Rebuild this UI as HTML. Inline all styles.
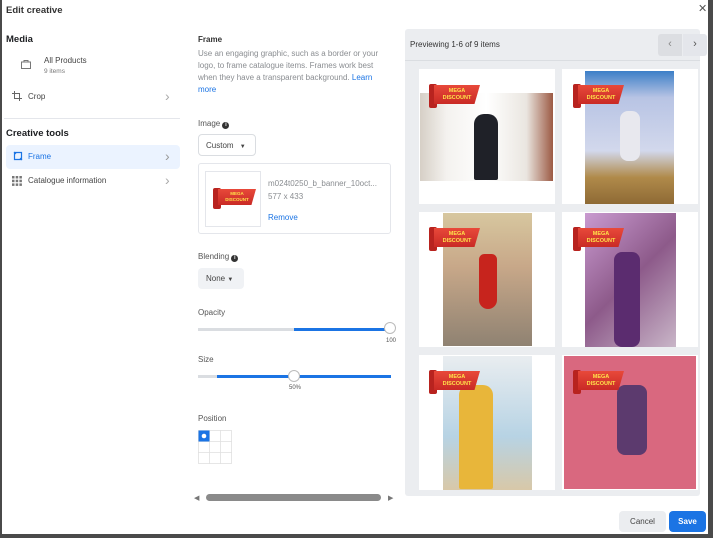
<!DOCTYPE html>
<html><head><style>
*{box-sizing:border-box;margin:0;padding:0}
body{width:713px;height:538px;background:#4a4a4a;font-family:"Liberation Sans",sans-serif;position:relative;overflow:hidden;color:#1c1e21}
.main{position:absolute;left:2px;top:0;width:706px;height:534px;background:#fff}
.a{position:absolute}
.t{font-size:8px;color:#444}
.g{color:#8a8d91}
.chev{position:absolute;font-size:14px;color:#aaa;font-weight:300}
.card{position:absolute;background:#fff;width:136px;height:135px;overflow:hidden}
.ph{position:absolute}
.rib{position:absolute;width:50px;height:22px}
.rib .r1{position:absolute;left:0;top:0;width:8px;height:24px;background:#b8231f;border-radius:2px}
.rib .r2{position:absolute;left:5px;top:1px;width:46px;height:19px;background:linear-gradient(#e8493a,#c92a25);clip-path:polygon(0 0,100% 0,88% 100%,0 100%);color:#ffe24a;font-size:5.5px;font-weight:bold;text-align:center;line-height:7px;padding-top:3px}
</style></head><body>
<div class="main">
<div class="a" style="left:4px;top:5px;font-size:9.5px;font-weight:bold;color:#333">Edit creative</div>
<div class="a" style="left:696px;top:2px;font-size:11px;color:#555">✕</div>

<div class="a" style="left:4px;top:34px;font-size:9.5px;font-weight:bold">Media</div>
<svg class="a" style="left:18px;top:58px" width="12" height="12" viewBox="0 0 12 12"><path d="M1.5 4h9v6.5h-9zM4 4V2.5h4V4" fill="none" stroke="#777" stroke-width="1"/></svg>
<div class="a t" style="left:42px;top:56px">All Products</div>
<div class="a" style="left:42px;top:68px;font-size:6.5px;color:#777">9 items</div>
<svg class="a" style="left:10px;top:91px" width="10" height="10" viewBox="0 0 10 10"><path d="M2.5 0v7.5H10M0 2.5h7.5V10" fill="none" stroke="#666" stroke-width="1"/></svg>
<div class="a t" style="left:26px;top:92px">Crop</div>
<div class="chev" style="left:163px;top:88px">›</div>
<div class="a" style="left:2px;top:118px;width:176px;height:1px;background:#e4e6eb"></div>
<div class="a" style="left:4px;top:128px;font-size:9.5px;font-weight:bold">Creative tools</div>
<div class="a" style="left:4px;top:145px;width:174px;height:24px;background:#ebf3ff;border-radius:4px"></div>
<svg class="a" style="left:11px;top:151px" width="10" height="10" viewBox="0 0 10 10"><path d="M1.5 1.5h7v7h-7z" fill="none" stroke="#1b74e4" stroke-width="1.2"/><path d="M1 1l2 2M9 9L7 7" stroke="#1b74e4"/></svg>
<div class="a" style="left:26px;top:152px;font-size:8px;color:#1b74e4">Frame</div>
<div class="chev" style="left:163px;top:148px;color:#999">›</div>
<svg class="a" style="left:10px;top:176px" width="10" height="10" viewBox="0 0 10 10"><g fill="#777"><rect x="0" y="0" width="2.5" height="2.5"/><rect x="3.7" y="0" width="2.5" height="2.5"/><rect x="7.4" y="0" width="2.5" height="2.5"/><rect x="0" y="3.7" width="2.5" height="2.5"/><rect x="3.7" y="3.7" width="2.5" height="2.5"/><rect x="7.4" y="3.7" width="2.5" height="2.5"/><rect x="0" y="7.4" width="2.5" height="2.5"/><rect x="3.7" y="7.4" width="2.5" height="2.5"/><rect x="7.4" y="7.4" width="2.5" height="2.5"/></g></svg>
<div class="a t" style="left:26px;top:176px">Catalogue information</div>
<div class="chev" style="left:163px;top:172px">›</div>

<div class="a" style="left:196px;top:35px;font-size:8px;font-weight:bold;color:#333">Frame</div>
<div class="a g" style="left:196px;top:48px;width:192px;font-size:8px;line-height:12px">Use an engaging graphic, such as a border or your logo, to frame catalogue items. Frames work best when they have a transparent background. <span style="color:#1b74e4">Learn more</span></div>
<div class="a" style="left:196px;top:119px;font-size:8px;color:#555">Image <span style="display:inline-block;width:7px;height:7px;border-radius:50%;background:#333;color:#fff;font-size:5px;text-align:center;line-height:7px;font-weight:bold">i</span></div>
<div class="a" style="left:196px;top:134px;width:58px;height:22px;border:1px solid #dadde1;border-radius:4px;font-size:8px;color:#444;padding:6px 0 0 7px">Custom <span style="font-size:6px;margin-left:4px">▼</span></div>
<div class="a" style="left:196px;top:163px;width:193px;height:71px;border:1px solid #e4e6eb;border-radius:3px"></div>
<div class="a" style="left:203px;top:171px;width:56px;height:56px;border:1px solid #e4e6eb"></div>
<div class="rib a" style="left:211px;top:188px;width:42px"><div class="r1" style="height:21px"></div><div class="r2" style="width:38px;height:16px;font-size:4.5px;line-height:6px;padding-top:2px">MEGA<br>DISCOUNT</div></div>
<div class="a g" style="left:266px;top:179px;font-size:8px">m024t0250_b_banner_10oct...</div>
<div class="a g" style="left:266px;top:192px;font-size:8px">577 x 433</div>
<div class="a" style="left:266px;top:213px;font-size:8px;color:#1b74e4">Remove</div>

<div class="a" style="left:196px;top:252px;font-size:8px;color:#555">Blending <span style="display:inline-block;width:7px;height:7px;border-radius:50%;background:#333;color:#fff;font-size:5px;text-align:center;line-height:7px;font-weight:bold">i</span></div>
<div class="a" style="left:196px;top:268px;width:46px;height:21px;background:#f0f2f5;border-radius:4px;font-size:8px;color:#444;padding:6px 0 0 8px">None <span style="font-size:6px">▼</span></div>
<div class="a" style="left:196px;top:308px;font-size:8px;color:#555">Opacity</div>
<div class="a" style="left:196px;top:328px;width:96px;height:3px;background:#dadde1"></div>
<div class="a" style="left:292px;top:328px;width:96px;height:3px;background:#1b74e4"></div>
<div class="a" style="left:382px;top:322px;width:12px;height:12px;border-radius:50%;background:#fff;border:1px solid #bbb"></div>
<div class="a" style="left:384px;top:338px;font-size:6px;color:#555">100</div>
<div class="a" style="left:196px;top:355px;font-size:8px;color:#555">Size</div>
<div class="a" style="left:196px;top:375px;width:19px;height:3px;background:#dadde1"></div>
<div class="a" style="left:215px;top:375px;width:174px;height:3px;background:#1b74e4"></div>
<div class="a" style="left:286px;top:370px;width:12px;height:12px;border-radius:50%;background:#fff;border:1px solid #bbb"></div>
<div class="a" style="left:287px;top:385px;font-size:6px;color:#555">50%</div>
<div class="a" style="left:196px;top:414px;font-size:8px;color:#555">Position</div>
<svg class="a" style="left:196px;top:430px" width="34" height="34" viewBox="0 0 34 34"><g fill="none" stroke="#e0e0e0" stroke-width="0.8"><rect x="0.5" y="0.5" width="33" height="33"/><path d="M11.5 0v34M22.5 0v34M0 11.5h34M0 22.5h34"/></g><rect x="0.5" y="0.5" width="11" height="11" fill="#1b74e4"/><circle cx="6" cy="6" r="2.3" fill="#fff"/></svg>
<div class="a" style="left:192px;top:494px;font-size:7px;color:#777">◀</div>
<div class="a" style="left:204px;top:494px;width:175px;height:7px;border-radius:4px;background:#8a8a8a"></div>
<div class="a" style="left:386px;top:494px;font-size:7px;color:#777">▶</div>

<div class="a" style="left:403px;top:29px;width:295px;height:467px;background:#ebedf0;border-radius:3px"></div>
<div class="a" style="left:403px;top:60px;width:295px;height:1px;background:#dadde1"></div>
<div class="a" style="left:408px;top:40px;font-size:8px;color:#333">Previewing 1-6 of 9 items</div>
<div class="a" style="left:656px;top:34px;width:24px;height:22px;background:#dcdee2;border-radius:3px 0 0 3px;color:#888;font-size:11px;text-align:center;line-height:21px">‹</div>
<div class="a" style="left:681px;top:34px;width:24px;height:22px;background:#e4e6eb;border-radius:0 3px 3px 0;color:#555;font-size:11px;text-align:center;line-height:21px">›</div>

<div class="card" style="left:417px;top:69px"><div class="ph" style="left:1px;top:24px;width:133px;height:88px;background:linear-gradient(90deg,#d6cfc6,#f4f2ef 20%,#fff 50%,#eae6e0 80%,#9c5a44)"></div><div class="ph" style="left:55px;top:45px;width:24px;height:66px;background:#1f2128;border-radius:10px 10px 2px 2px"></div></div>
<div class="card" style="left:560px;top:69px"><div class="ph" style="left:23px;top:2px;width:89px;height:133px;background:linear-gradient(#3c7fc7,#b8c4e4 20%,#d2d8ec 60%,#b08a4a 80%,#8e6a35)"></div><div class="ph" style="left:58px;top:42px;width:20px;height:50px;background:#e8e8ee;border-radius:8px"></div></div>
<div class="card" style="left:417px;top:212px"><div class="ph" style="left:24px;top:1px;width:89px;height:133px;background:linear-gradient(#d7c79f,#c8a889 40%,#8f8272)"></div><div class="ph" style="left:60px;top:42px;width:18px;height:55px;background:#c7241d;border-radius:6px 6px 10px 10px"></div></div>
<div class="card" style="left:560px;top:212px"><div class="ph" style="left:23px;top:1px;width:91px;height:134px;background:linear-gradient(135deg,#c99ad0,#8d5a8a 50%,#c9b6c8)"></div><div class="ph" style="left:52px;top:40px;width:26px;height:95px;background:#5b2c6f;border-radius:8px"></div></div>
<div class="card" style="left:417px;top:355px"><div class="ph" style="left:24px;top:1px;width:89px;height:134px;background:linear-gradient(#e9edf0,#b7d3e4 60%,#d8c8a8)"></div><div class="ph" style="left:40px;top:30px;width:34px;height:104px;background:#e8b63a;border-radius:10px 10px 2px 2px"></div></div>
<div class="card" style="left:560px;top:355px"><div class="ph" style="left:2px;top:1px;width:132px;height:133px;background:#d9687f"></div><div class="ph" style="left:55px;top:30px;width:30px;height:70px;background:#5c3a6e;border-radius:8px"></div></div>

<div class="rib" style="left:427px;top:84px"><div class="r1"></div><div class="r2">MEGA<br>DISCOUNT</div></div>
<div class="rib" style="left:571px;top:84px"><div class="r1"></div><div class="r2">MEGA<br>DISCOUNT</div></div>
<div class="rib" style="left:427px;top:227px"><div class="r1"></div><div class="r2">MEGA<br>DISCOUNT</div></div>
<div class="rib" style="left:571px;top:227px"><div class="r1"></div><div class="r2">MEGA<br>DISCOUNT</div></div>
<div class="rib" style="left:427px;top:370px"><div class="r1"></div><div class="r2">MEGA<br>DISCOUNT</div></div>
<div class="rib" style="left:571px;top:370px"><div class="r1"></div><div class="r2">MEGA<br>DISCOUNT</div></div>

<div class="a" style="left:617px;top:511px;width:47px;height:21px;background:#ebedf0;border-radius:4px;font-size:8px;color:#444;text-align:center;line-height:21px">Cancel</div>
<div class="a" style="left:667px;top:511px;width:37px;height:21px;background:#1b74e4;border-radius:4px;font-size:8px;color:#fff;font-weight:bold;text-align:center;line-height:21px">Save</div>
</div>
</body></html>
